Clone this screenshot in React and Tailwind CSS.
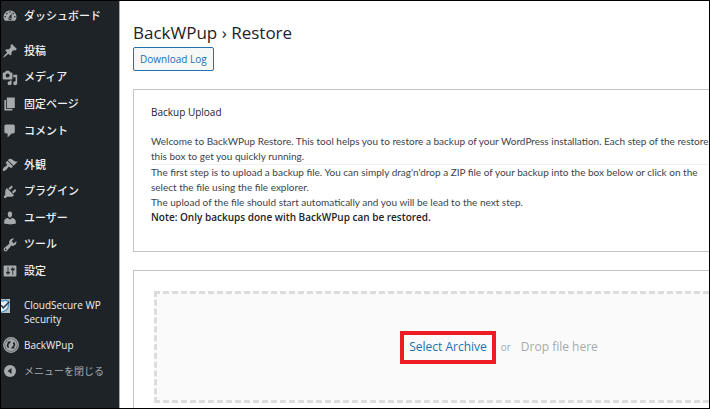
import React from 'react';

const contentMenu = [
  { label: '投稿', path: 'M10.44 3.02l1.82-1.82 6.36 6.35-1.83 1.82c-1.05-.68-2.48-.57-3.41.36l-.75.75c-.92.93-1.04 2.35-.35 3.41l-1.83 1.82-2.41-2.41-2.8 2.79c-.42.42-3.38 2.71-3.8 2.29s1.86-3.39 2.28-3.81l2.79-2.79L4.1 9.36l1.83-1.82c1.05.69 2.48.57 3.4-.36l.75-.75c.93-.92 1.05-2.35.36-3.41z' },
  { label: 'メディア', path: 'M13 11V4c0-.55-.45-1-1-1h-1.67L9 1H5L3.67 3H2c-.55 0-1 .45-1 1v7c0 .55.45 1 1 1h10c.55 0 1-.45 1-1zM7 4.5c1.38 0 2.5 1.12 2.5 2.5S8.38 9.5 7 9.5 4.5 8.38 4.5 7 5.62 4.5 7 4.5zM14 6h5v10.5c0 1.38-1.12 2.5-2.5 2.5S14 17.88 14 16.5s1.12-2.5 2.5-2.5c.17 0 .34.02.5.05V9h-3V6zm-4 8.05V13h2v3.5c0 1.38-1.12 2.5-2.5 2.5S7 17.88 7 16.5 8.12 14 9.5 14c.17 0 .34.02.5.05z' },
  { label: '固定ページ', path: 'M6 15V2h10v13H6zm-1 1h8v2H3V5h2v11z' },
  { label: 'コメント', path: 'M5 2h9c1.1 0 2 .9 2 2v7c0 1.1-.9 2-2 2h-2l-5 5v-5H5c-1.1 0-2-.9-2-2V4c0-1.1.9-2 2-2z' },
];

const adminMenu = [
  { label: '外観', path: 'M14.48 11.06L7.41 3.99l1.5-1.5c.5-.56 2.3-.47 3.51.32 1.21.8 1.43 1.28 2.91 2.1 1.18.64 2.45 1.26 4.45.85zm-.71.71L6.7 4.7 4.93 6.47c-.39.39-.39 1.02 0 1.41l1.06 1.06c.39.39.39 1.03 0 1.42-.6.6-1.43 1.11-2.21 1.69-.35.26-.7.53-1.01.84C1.43 14.23.4 16.08 1.4 17.07c.99 1 2.84-.03 4.18-1.36.31-.31.58-.66.85-1.02.57-.78 1.08-1.61 1.69-2.21.39-.39 1.02-.39 1.41 0l1.06 1.06c.39.39 1.02.39 1.41 0z' },
  { label: 'プラグイン', path: 'M13.11 4.36L9.87 7.6 8 5.73l3.24-3.24c.35-.34 1.05-.2 1.56.32.52.51.66 1.21.31 1.55zm-8 1.77l.91-1.12 9.01 9.01-1.19.84c-.71.71-2.63 1.16-3.82 1.16H6.14L4.9 17.26c-.59.59-1.54.59-2.12 0-.59-.58-.59-1.53 0-2.12l1.24-1.24v-3.88c0-1.13.4-3.19 1.09-3.89zm7.26 3.97l3.24-3.24c.34-.35 1.04-.21 1.55.31.52.51.66 1.21.31 1.55l-3.24 3.25z' },
  { label: 'ユーザー', path: 'M10 9.25c-2.27 0-2.73-3.44-2.73-3.44C7 4.02 7.82 2 9.97 2c2.16 0 2.98 2.02 2.71 3.81 0 0-.41 3.44-2.68 3.44zm0 2.57L12.72 10c2.39 0 4.52 2.33 4.52 4.53v2.49s-3.65 1.13-7.24 1.13c-3.65 0-7.24-1.13-7.24-1.13v-2.49c0-2.25 1.94-4.48 4.47-4.48z' },
  { label: 'ツール', path: 'M16.68 9.77c-1.34 1.34-3.3 1.67-4.95.99l-5.41 6.52c-.99.99-2.59.99-3.58 0s-.99-2.59 0-3.57l6.52-5.42c-.68-1.65-.35-3.61.99-4.95 1.28-1.28 3.12-1.62 4.72-1.06l-2.89 2.89 2.82 2.82 2.86-2.87c.53 1.58.18 3.39-1.08 4.65zM3.81 16.21c.4.39 1.04.39 1.43 0 .4-.4.4-1.04 0-1.43-.39-.4-1.03-.4-1.43 0-.39.39-.39 1.03 0 1.43z' },
  { label: '設定', path: 'M18 16V4c0-.55-.45-1-1-1H3c-.55 0-1 .45-1 1v12c0 .55.45 1 1 1h14c.55 0 1-.45 1-1zM8 11h1c.55 0 1 .45 1 1s-.45 1-1 1H8v1.5c0 .28-.22.5-.5.5s-.5-.22-.5-.5V13H6c-.55 0-1-.45-1-1s.45-1 1-1h1V5.5c0-.28.22-.5.5-.5s.5.22.5.5V11zm5-2h-1c-.55 0-1-.45-1-1s.45-1 1-1h1V5.5c0-.28.22-.5.5-.5s.5.22.5.5V7h1c.55 0 1 .45 1 1s-.45 1-1 1h-1v5.5c0 .28-.22.5-.5.5s-.5-.22-.5-.5V9z' },
];

const dashboardPath = 'M3.76 16h12.48A7.998 7.998 0 0 0 10 3a7.998 7.998 0 0 0-6.24 13zM10 4c.55 0 1 .45 1 1s-.45 1-1 1-1-.45-1-1 .45-1 1-1zM6 6c.55 0 1 .45 1 1s-.45 1-1 1-1-.45-1-1 .45-1 1-1zm8 0c.55 0 1 .45 1 1s-.45 1-1 1-1-.45-1-1 .45-1 1-1zm-5.37 5.55L12 7v6c0 1.1-.9 2-2 2s-2-.9-2-2c0-.57.24-1.08.63-1.45zM4 10c.55 0 1 .45 1 1s-.45 1-1 1-1-.45-1-1 .45-1 1-1zm12 0c.55 0 1 .45 1 1s-.45 1-1 1-1-.45-1-1 .45-1 1-1zm-5 3c0-.55-.45-1-1-1s-1 .45-1 1 .45 1 1 1 1-.45 1-1z';

function MenuItem({ label, path }) {
  return (
    <li>
      <a href="#" className="flex h-[26px] items-center gap-[6px] pl-px text-[11px] font-medium text-[#f0f0f1]">
        <svg viewBox="0 0 20 20" className="size-4 shrink-0 fill-[#a7aaad]" fillRule="evenodd" aria-hidden="true">
          <path d={path} />
        </svg>
        {label}
      </a>
    </li>
  );
}

// Shield with a tick, its left part runs under the edge of the menu
function CloudSecureIcon() {
  return (
    <svg viewBox="0 0 16 16" className="size-4 shrink-0" aria-hidden="true">
      <path d="M0 1h9v14H0z" fill="#b9c0c6" />
      <path d="M0 3.200C2 3.200 3.500 2.600 4.500 2c1 .8 1.800 1.100 2.800 1.200V8c0 3-2.300 5-7.300 6.300" fill="#e4edf3" stroke="#3a8fc8" strokeWidth="1.200" />
      <path d="M0 7.200l2.300 2.600L8.300 3.800" fill="none" stroke="#2b3a48" strokeWidth="1.500" />
    </svg>
  );
}

function BackWPupIcon() {
  return (
    <svg viewBox="0 0 16 16" className="size-4 shrink-0" aria-hidden="true">
      <circle cx="8" cy="8" r="7.300" fill="#5b6064" stroke="#a7aaad" strokeWidth="1.200" />
      <circle cx="8" cy="8" r="5.900" fill="#a7aaad" />
      <path d="M5.600 10.600A3.300 3.300 0 0 1 5.400 6.200M10.400 5.400a3.300 3.300 0 0 1 .2 4.400" fill="none" stroke="#1d2327" strokeWidth="1.500" />
      <path d="M4.300 4.500l3.900.1-2.400 3zM11.700 11.500l-3.900-.1 2.400-3z" fill="#1d2327" />
    </svg>
  );
}

function Sidebar() {
  return (
    <nav className="w-[119px] shrink-0 border-r border-[#a7aaad] bg-[#1d2327] pt-[2px] whitespace-nowrap">
      <ul>
        <MenuItem label="ダッシュボード" path={dashboardPath} />
      </ul>
      <ul className="mt-[9px] flex h-[106px] flex-col justify-between">
        {contentMenu.map((item) => <MenuItem key={item.label} {...item} />)}
      </ul>
      <ul className="mt-2 flex h-[132px] flex-col justify-between">
        {adminMenu.map((item) => <MenuItem key={item.label} {...item} />)}
      </ul>
      <ul className="mt-[14px]">
        <li>
          <a href="#" className="flex gap-[7px] leading-[14px] text-[#f0f0f1]">
            <CloudSecureIcon />
            <span>CloudSecure WP<br />Security</span>
          </a>
        </li>
        <li className="mt-[6px]">
          <a href="#" className="flex h-[26px] items-center gap-[5px] pl-[2px] text-[#f0f0f1]">
            <BackWPupIcon />
            BackWPup
          </a>
        </li>
        <li>
          <button type="button" className="flex h-[26px] items-center gap-[6px] pl-px text-[#a7aaad]">
            <svg viewBox="0 0 16 16" className="size-4 shrink-0" aria-hidden="true">
              <circle cx="8" cy="8" r="6" fill="#a7aaad" />
              <path d="M9.500 5v6L5.700 8z" fill="#1d2327" />
            </svg>
            メニューを閉じる
          </button>
        </li>
      </ul>
    </nav>
  );
}

export default function App() {
  return (
    <div className="flex h-screen overflow-hidden border border-black bg-white font-['Open_Sans','Noto_Sans_CJK_JP',sans-serif] text-[10px] text-[#3c434a]">
      <Sidebar />
      <main className="min-w-0 flex-1 overflow-hidden pt-[19px] pl-[13px]">
        <h1 className="text-[17px] leading-[26px] text-[#1d2327]">BackWPup › Restore</h1>
        <button type="button" className="mt-px block h-6 rounded-[2px] border border-[#2271b1] bg-[#f6f7f7] px-[6px] leading-[22px] text-[#2271b1]">
          Download Log
        </button>

        {/* The panels keep a desktop width and run on past a narrow window */}
        <div className="min-w-[732px]">
          <section className="mt-[18px] border border-[#c3c4c7] pt-[14px] pb-[26px] pl-[17px] whitespace-nowrap">
            <h2 className="leading-4 text-[#1d2327]">Backup Upload</h2>
            <div className="mt-[14px] font-['Lato',sans-serif] leading-[15px]">
              <p className="border-b border-[#f0f0f1]">
                Welcome to BackWPup Restore. This tool helps you to restore a backup of your WordPress installation. Each step of the restore
                <br />
                this box to get you quickly running.
              </p>
              <p>
                The first step is to upload a backup file. You can simply drag'n'drop a ZIP file of your backup into the box below or click on the
                <br />
                select the file using the file explorer.
                <br />
                The upload of the file should start automatically and you will be lead to the next step.
              </p>
            </div>
            <p className="leading-[15px] font-semibold text-[#1d2327]">Note: Only backups done with BackWPup can be restored.</p>
          </section>

          <section className="mt-[18px] border border-[#c3c4c7] p-5">
            <div className="flex h-[112px] items-center justify-center border-[3px] border-dashed border-[#dcdcdc] bg-[#fafafa] text-[12px] text-[#a7aaad]">
              <button type="button" className="h-[33px] border-4 border-[#ed1c24] px-[5px] text-[#2271b1]">Select Archive</button>
              <span className="ml-[5px] text-[10px]">or</span>
              <span className="ml-[10px]">Drop file here</span>
            </div>
          </section>
        </div>
      </main>
    </div>
  );
}
